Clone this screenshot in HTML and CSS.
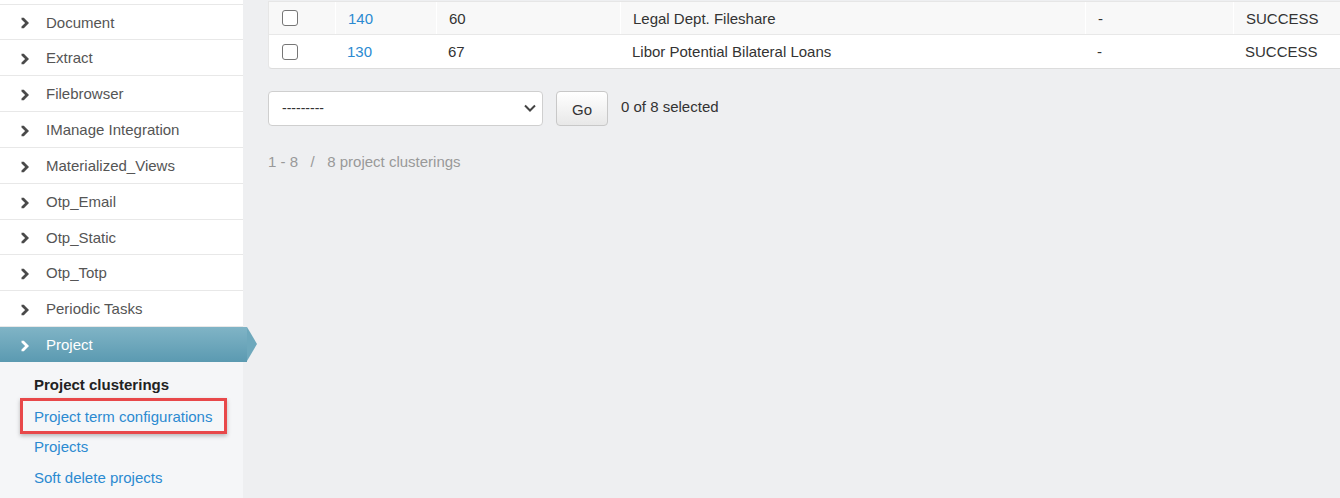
FILE: index.html
```html
<!DOCTYPE html>
<html>
<head>
<meta charset="utf-8">
<link rel="stylesheet" href="styles.css">
</head>
<body>
<div class="page">
  <aside class="sidebar">
    <div class="cut"></div>
    <ul class="menu">
      <li class="item"><svg class="chev" viewBox="0 0 10 12"><path d="M1.5 0.8 L3.8 0.8 L9 6 L3.8 11.2 L1.5 11.2 L1.5 9.6 L5.1 6 L1.5 2.4 Z"/></svg>Document</li>
      <li class="item"><svg class="chev" viewBox="0 0 10 12"><path d="M1.5 0.8 L3.8 0.8 L9 6 L3.8 11.2 L1.5 11.2 L1.5 9.6 L5.1 6 L1.5 2.4 Z"/></svg>Extract</li>
      <li class="item"><svg class="chev" viewBox="0 0 10 12"><path d="M1.5 0.8 L3.8 0.8 L9 6 L3.8 11.2 L1.5 11.2 L1.5 9.6 L5.1 6 L1.5 2.4 Z"/></svg>Filebrowser</li>
      <li class="item"><svg class="chev" viewBox="0 0 10 12"><path d="M1.5 0.8 L3.8 0.8 L9 6 L3.8 11.2 L1.5 11.2 L1.5 9.6 L5.1 6 L1.5 2.4 Z"/></svg>IManage Integration</li>
      <li class="item"><svg class="chev" viewBox="0 0 10 12"><path d="M1.5 0.8 L3.8 0.8 L9 6 L3.8 11.2 L1.5 11.2 L1.5 9.6 L5.1 6 L1.5 2.4 Z"/></svg>Materialized_Views</li>
      <li class="item"><svg class="chev" viewBox="0 0 10 12"><path d="M1.5 0.8 L3.8 0.8 L9 6 L3.8 11.2 L1.5 11.2 L1.5 9.6 L5.1 6 L1.5 2.4 Z"/></svg>Otp_Email</li>
      <li class="item"><svg class="chev" viewBox="0 0 10 12"><path d="M1.5 0.8 L3.8 0.8 L9 6 L3.8 11.2 L1.5 11.2 L1.5 9.6 L5.1 6 L1.5 2.4 Z"/></svg>Otp_Static</li>
      <li class="item"><svg class="chev" viewBox="0 0 10 12"><path d="M1.5 0.8 L3.8 0.8 L9 6 L3.8 11.2 L1.5 11.2 L1.5 9.6 L5.1 6 L1.5 2.4 Z"/></svg>Otp_Totp</li>
      <li class="item"><svg class="chev" viewBox="0 0 10 12"><path d="M1.5 0.8 L3.8 0.8 L9 6 L3.8 11.2 L1.5 11.2 L1.5 9.6 L5.1 6 L1.5 2.4 Z"/></svg>Periodic Tasks</li>
      <li class="item active"><svg class="chev" viewBox="0 0 10 12"><path d="M1.5 0.8 L3.8 0.8 L9 6 L3.8 11.2 L1.5 11.2 L1.5 9.6 L5.1 6 L1.5 2.4 Z"/></svg>Project<span class="tip"></span></li>
    </ul>
    <ul class="submenu">
      <li class="sub current">Project clusterings</li>
      <li class="sub link boxed">Project term configurations</li>
      <li class="sub link">Projects</li>
      <li class="sub link">Soft delete projects</li>
    </ul>
  </aside>
  <main class="main">
    <div class="table">
      <div class="row odd">
        <div class="cell c1"><span class="cb"></span></div>
        <div class="cell c2"><span class="link">140</span></div>
        <div class="cell c3">60</div>
        <div class="cell c4">Legal Dept. Fileshare</div>
        <div class="cell c5">-</div>
        <div class="cell c6">SUCCESS</div>
      </div>
      <div class="row">
        <div class="cell c1"><span class="cb"></span></div>
        <div class="cell c2"><span class="link">130</span></div>
        <div class="cell c3">67</div>
        <div class="cell c4">Libor Potential Bilateral Loans</div>
        <div class="cell c5">-</div>
        <div class="cell c6">SUCCESS</div>
      </div>
    </div>
    <div class="actions">
      <div class="select"><span>---------</span><svg class="caret" viewBox="0 0 12 8"><path d="M1 1.5 L6 6.5 L11 1.5" fill="none" stroke="#444" stroke-width="2"/></svg></div>
      <button class="go">Go</button>
      <span class="count">0 of 8 selected</span>
    </div>
    <div class="paginator">1 - 8 &nbsp;&nbsp;/&nbsp;&nbsp; 8 project clusterings</div>
  </main>
</div>
</body>
</html>
```

FILE: styles.css
```css
* { box-sizing: border-box; }
html, body { margin: 0; padding: 0; }
body {
  background: #eeeff1;
  font-family: "Liberation Sans", Arial, sans-serif;
  font-size: 15px;
  color: #333;
  width: 1340px;
  height: 498px;
  overflow: hidden;
}
.page { display: flex; height: 498px; }
.sidebar {
  width: 243px;
  flex: none;
  background: #fff;
  display: flex;
  flex-direction: column;
}
.cut { height: 5px; border-bottom: 1px solid #e8e8e8; }
.menu, .submenu { list-style: none; margin: 0; padding: 0; }
.item {
  height: 36px;
  display: flex;
  align-items: center;
  padding-left: 20px;
  color: #555;
  border-bottom: 1px solid #e8e8e8;
  position: relative;
}
.item:nth-child(1), .item:nth-child(7) { height: 35px; }
.chev { width: 10px; height: 12px; fill: #4a4a4a; margin-right: 16px; margin-top: 2px; }
.item.active {
  height: 35px;
  color: #fff;
  border-bottom: none;
  background: linear-gradient(#80b4c6, #5b9ab1);
  width: 247px;
}
.item.active .chev { fill: #fff; }
.tip {
  position: absolute;
  right: -10px;
  top: 0;
  width: 0;
  height: 0;
  border-top: 17.5px solid transparent;
  border-bottom: 17.5px solid transparent;
  border-left: 10px solid #6ea8bc;
}
.submenu {
  flex: 1;
  background: #f5f6f8;
  padding-top: 7px;
}
.sub {
  height: 31px;
  display: flex;
  align-items: center;
  padding-left: 34px;
}
.sub.current { font-weight: bold; color: #222; font-size: 15px; }
.sub.link { color: #2b8ad1; }
.sub.boxed {
  margin-left: 20px;
  padding-left: 11px;
  width: 207px;
  height: 36px;
  margin-top: -2px;
  margin-bottom: -3px;
  border: 3px solid #e8484a;
  box-shadow: 0 2px 4px rgba(0,0,0,0.25);
}
.main {
  flex: 1;
  padding-left: 25px;
  min-width: 0;
}
.table {
  background: #fff;
  border-bottom: 1px solid #dcdcdc;
  border-left: 1px solid #e6e6e6;
  border-radius: 0 0 4px 4px;
  border-top: 1px solid #e6e6e6;
  margin-top: 1px;
  width: 1100px;
}
.row { display: flex; height: 33px; align-items: stretch; }
.row.odd { background: #f8f8f8; border-bottom: 1px solid #e8e8e8; }
.cell { display: flex; align-items: center; color: #333; }
.row.odd .cell + .cell { border-left: 1px solid #fff; }
.c1 { width: 66px; padding-left: 13px; }
.c2 { width: 101px; padding-left: 12px; }
.c3 { width: 184px; padding-left: 12px; }
.c4 { width: 465px; padding-left: 12px; }
.c5 { width: 148px; padding-left: 12px; }
.c6 { flex: 1; padding-left: 12px; }
.link { color: #2b8ad1; }
.cb {
  width: 16px;
  height: 16px;
  border: 1px solid #767676;
  border-radius: 3px;
  background: #fff;
}
.actions {
  display: flex;
  align-items: center;
  margin-top: 21px;
  height: 36px;
}
.select {
  width: 275px;
  height: 35px;
  background: #fff;
  border: 1px solid #cfcfcf;
  border-radius: 4px;
  display: flex;
  align-items: center;
  justify-content: space-between;
  padding: 0 6px 0 13px;
  color: #333;
  font-size: 14px;
}
.caret { width: 12px; height: 8px; }
.go {
  margin-left: 13px;
  width: 52px;
  height: 35px;
  border: 1px solid #c8c8c8;
  border-radius: 4px;
  background: linear-gradient(#fff, #e8e8e8);
  font-family: "Liberation Sans", Arial, sans-serif;
  font-size: 15px;
  color: #333;
  padding: 0;
  padding-top: 2px;
}
.count { margin-left: 13px; color: #333; margin-top: -4px; }
.paginator {
  margin-top: 27px;
  color: #999;
}
```
